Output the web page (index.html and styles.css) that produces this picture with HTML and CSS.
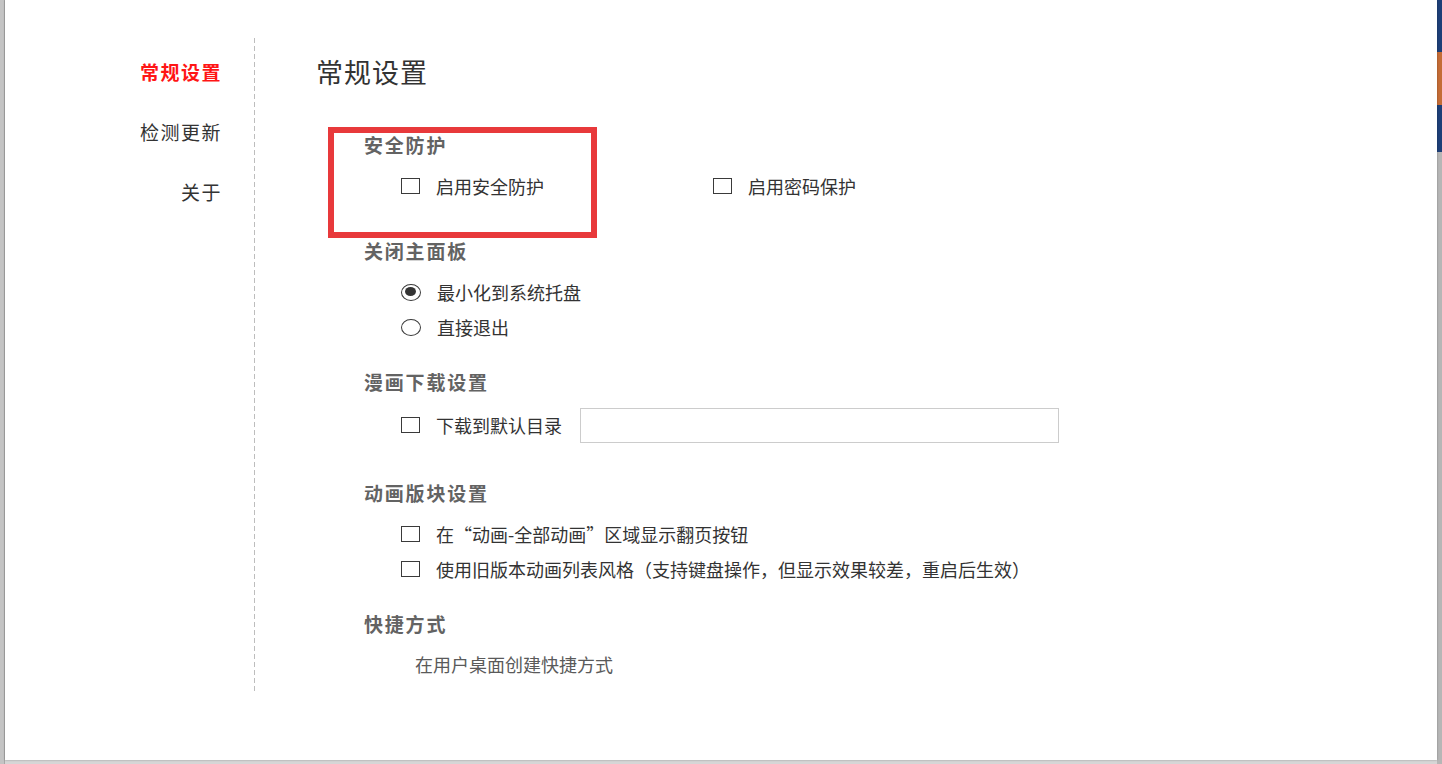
FILE: index.html
```html
<!DOCTYPE html>
<html lang="zh-CN">
  <head>
    <meta charset="UTF-8">
    <title>设置</title>
    <link rel="stylesheet" href="styles.css">
  </head>
  <body>
    <div class="screen">
      <div class="edge-left"></div>

      <div class="dialog">
        <nav class="side">
          <a class="side-item active" href="javascript:">常规设置</a>
          <a class="side-item" href="javascript:">检测更新</a>
          <a class="side-item" href="javascript:">关于</a>
        </nav>

        <div class="panel">
          <h1 class="panel-title">常规设置</h1>

          <div class="group single">
            <h2 class="group-title">安全防护</h2>
            <div class="options">
              <div class="row">
                <label class="opt wide"><span class="check"></span><span class="text">启用安全防护</span></label>
                <label class="opt"><span class="check"></span><span class="text">启用密码保护</span></label>
              </div>
            </div>
          </div>

          <div class="group">
            <h2 class="group-title">关闭主面板</h2>
            <div class="options">
              <label class="row opt"><span class="radio on"></span><span class="text">最小化到系统托盘</span></label>
              <label class="row opt"><span class="radio"></span><span class="text">直接退出</span></label>
            </div>
          </div>

          <div class="group single">
            <h2 class="group-title">漫画下载设置</h2>
            <div class="options">
              <div class="row field">
                <label class="opt"><span class="check"></span><span class="text">下载到默认目录</span></label>
                <input class="path" type="text">
              </div>
            </div>
          </div>

          <div class="group">
            <h2 class="group-title">动画版块设置</h2>
            <div class="options">
              <label class="row opt"><span class="check"></span><span class="text">在“动画-全部动画”区域显示翻页按钮</span></label>
              <label class="row opt"><span class="check"></span><span class="text">使用旧版本动画列表风格（支持键盘操作，但显示效果较差，重启后生效）</span></label>
            </div>
          </div>

          <div class="group">
            <h2 class="group-title">快捷方式</h2>
            <div class="options plain">
              <div class="row"><span class="text muted">在用户桌面创建快捷方式</span></div>
            </div>
          </div>
        </div>

        <div class="mark"></div>
      </div>

      <div class="edge-right">
        <div class="app-bar"><div class="app-tab"></div></div>
      </div>
    </div>
  </body>
</html>
```

FILE: styles.css
```css
html, body
{
  margin:0;
  padding:0;
  overflow:hidden
}
body
{
  font-family:"Noto Sans CJK SC", "Liberation Sans", sans-serif;
  color:#333333;
  background-color:#d6d6d6
}
a, a:link, a:visited
{
  color:inherit;
  text-decoration:none
}
.screen
{
  display:flex;
  height:764px
}
.edge-left
{
  width:4px;
  height:764px;
  background-color:#c4c4c4;
  border-right:1px solid #a8a8a8
}
.edge-right
{
  flex:1;
  height:764px;
  background-color:#b6b6b6
}
.app-bar
{
  height:152px;
  padding-top:52px;
  box-sizing:border-box;
  background-color:#1d3f78
}
.app-tab
{
  height:53px;
  background-color:#c46c36
}
.dialog
{
  position:relative;
  display:flex;
  width:1432px;
  height:760px;
  background-color:#ffffff;
  box-shadow:0 0 2px rgba(0,0,0,0.3)
}

/* left menu */
.side
{
  position:relative;
  display:flex;
  flex-direction:column;
  align-items:flex-end;
  gap:30px;
  width:250px;
  height:654px;
  margin-top:38px;
  padding:19px 33px 0 0;
  box-sizing:border-box
}
.side:after
{
  content:"";
  position:absolute;
  top:0;
  right:0;
  width:1px;
  height:100%;
  background-image:repeating-linear-gradient(to bottom, #bdbdbd 0, #bdbdbd 5px, transparent 5px, transparent 8px)
}
.side-item
{
  font-size:19px;
  letter-spacing:1.5px;
  line-height:30px;
  color:#333333
}
.side-item.active
{
  color:#ff1515;
  font-weight:bold
}

/* right panel */
.panel
{
  padding:54px 0 0 61px
}
.panel-title
{
  margin:0;
  font-size:27px;
  letter-spacing:1px;
  line-height:36px;
  font-weight:normal;
  color:#333333
}
.group
{
  margin-left:48px
}
.group + .group
{
  margin-top:28px
}
.panel-title + .group
{
  margin-top:43px
}
.group.single
{
  padding-bottom:10px
}
.group-title
{
  margin:0;
  font-size:19px;
  letter-spacing:1.8px;
  line-height:24px;
  font-weight:bold;
  color:#636363
}
.options
{
  display:flex;
  flex-direction:column;
  gap:5px;
  margin-top:14px;
  padding-left:37px
}
.options.plain
{
  margin-top:13px;
  padding-left:51px
}
.row
{
  display:flex;
  align-items:center;
  height:30px
}
.row.field
{
  height:36px;
  margin:-1px 0 0 0
}
.opt
{
  display:flex;
  align-items:center
}
.opt.wide
{
  width:312px
}
.text
{
  font-size:18px;
  line-height:30px;
  white-space:nowrap
}
.muted
{
  color:#5a5a5a
}
.check
{
  width:19px;
  height:16px;
  margin-right:16px;
  box-sizing:border-box;
  border:1.5px solid #3a3a3a;
  background-color:#ffffff
}
.radio
{
  position:relative;
  width:20px;
  height:17px;
  margin-right:16px;
  box-sizing:border-box;
  border:1.5px solid #3a3a3a;
  border-radius:50%
}
.radio.on:after
{
  content:"";
  position:absolute;
  left:3px;
  top:2.5px;
  width:11px;
  height:9px;
  border-radius:50%;
  background-color:#333333
}
.path
{
  width:479px;
  height:35px;
  margin:0 0 0 18px;
  padding:0;
  box-sizing:border-box;
  border:1.5px solid #cccccc;
  outline:none
}

/* annotation box drawn over the dialog */
.mark
{
  position:absolute;
  left:323px;
  top:127px;
  width:269px;
  height:111px;
  box-sizing:border-box;
  border:6px solid #e8393b
}
```
